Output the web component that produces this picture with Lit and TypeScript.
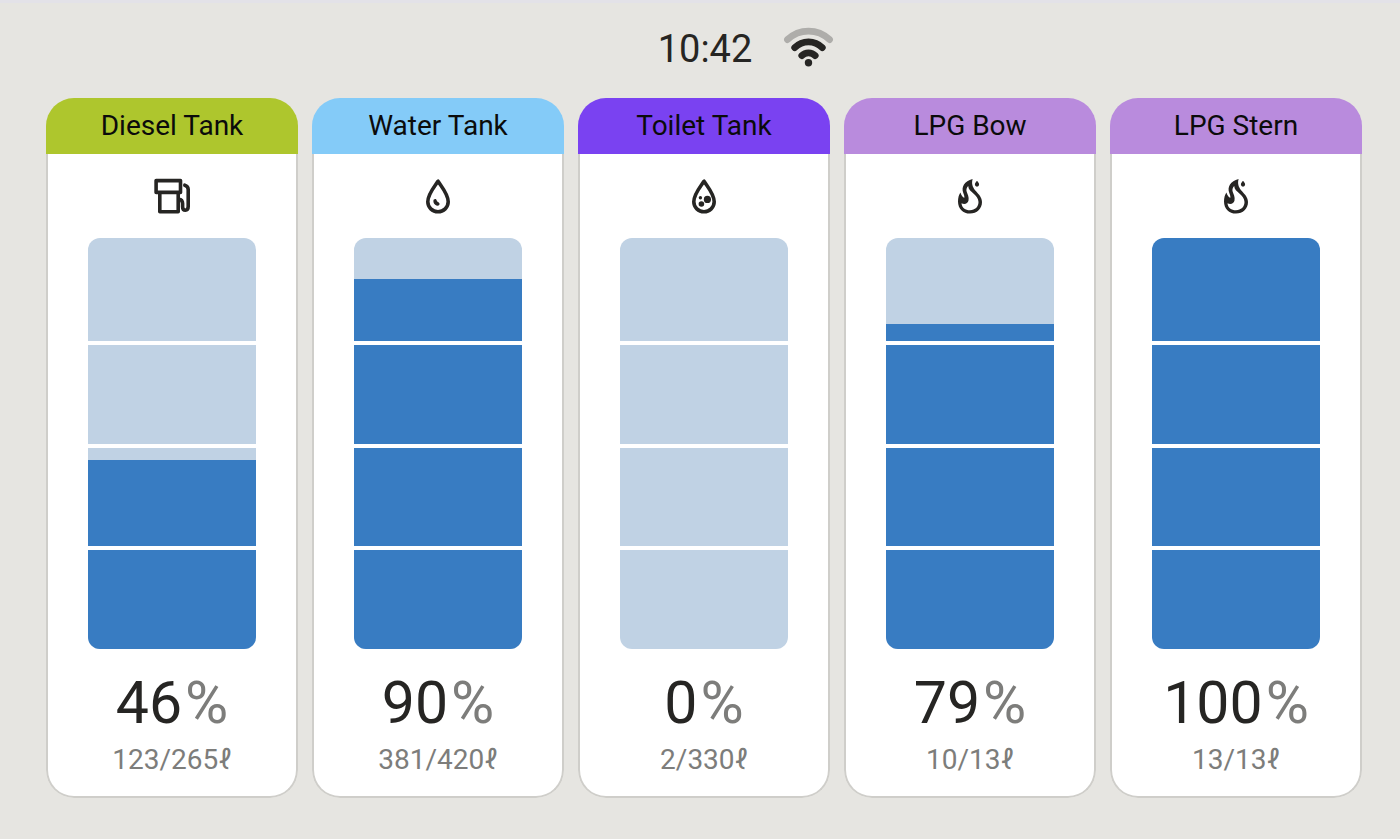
import { LitElement, html, svg, css } from "lit";
import { customElement, property } from "lit/decorators.js";

type IconName = "fuel" | "water" | "waste" | "gas";

interface Tank {
  name: string;
  color: string;
  icon: IconName;
  level: number;
  amount: number;
  capacity: number;
}

const TANKS: Tank[] = [
  { name: "Diesel Tank", color: "#aec62d", icon: "fuel", level: 46, amount: 123, capacity: 265 },
  { name: "Water Tank", color: "#84cbf8", icon: "water", level: 90, amount: 381, capacity: 420 },
  { name: "Toilet Tank", color: "#7a42f1", icon: "waste", level: 0, amount: 2, capacity: 330 },
  { name: "LPG Bow", color: "#b98bdd", icon: "gas", level: 79, amount: 10, capacity: 13 },
  { name: "LPG Stern", color: "#b98bdd", icon: "gas", level: 100, amount: 13, capacity: 13 },
];

const DROP = svg`<path d="M20 4.2C17.2 8.8 9.8 17 9.8 24.8A10.2 10 0 0 0 30.2 24.8C30.2 17 22.8 8.8 20 4.2Z" />`;

const ICONS = {
  fuel: svg`
    <path d="M4.1 3.6H28.5V15.4H4.1Z" />
    <path d="M7.8 15.4V34.8H26.2V15.4" />
    <path d="M32.8 8.2Q36.2 9.2 36.2 12.5V29.6Q36.2 33.2 33.4 33.2Q30.6 33.2 30.6 29.8V26.6Q30.6 22.6 26.8 22.2" stroke-linecap="round" />`,
  water: svg`${DROP}<path class="solid" d="M15.6 22.8C17 21.6 18.4 21.8 18.7 23.6C19 25.2 21.2 25 21.6 26.8C21.6 29 19 29.2 17.2 27.8C15.6 26.6 15 24.6 15.6 22.8Z" />`,
  waste: svg`${DROP}
    <circle class="solid" cx="23.4" cy="22.4" r="3.6" />
    <circle class="solid" cx="17.4" cy="27" r="2.8" />
    <circle class="solid" cx="16.4" cy="20.8" r="1.7" />`,
  gas: svg`
    <path class="solid" fill-rule="evenodd" d="M22.6 2C14.4 4.2 11 10 13.3 16C13.9 17.6 14.5 19 14.4 20.8C12.6 20.2 11.4 18.2 10.4 15.4C8.8 17.8 8 20.8 8 24.4C8 31.6 13 36.6 20 36.6C27 36.6 32 31.6 32 25C32 15.6 19.4 13.6 22.6 2ZM18.2 9C18.4 15.4 28.5 17.4 28.5 25C28.5 29.8 25 33.2 20 33.2C15.4 33.2 11.8 30.6 11.5 26.2C14.6 27.8 17.8 26.6 18.5 23.4C19.2 20.2 17.6 17.4 16.7 14.8C16 12.6 16.6 10.6 18.2 9Z" />
    <path class="solid" d="M27 3.8C28.2 5.4 29.1 6.2 29.1 7.6A2.1 2.1 0 0 1 24.9 7.6C24.9 6.2 25.8 5.4 27 3.8Z" />`,
};

@customElement("tank-card")
class TankCard extends LitElement {
  @property({ attribute: false }) tank!: Tank;

  static styles = css`
    :host {
      display: block;
      min-width: 0;
    }
    .card {
      box-sizing: border-box;
      height: 100%;
      display: flex;
      flex-direction: column;
      align-items: center;
      overflow: hidden;
      border-radius: 28px;
    }
    .title {
      box-sizing: border-box;
      width: 100%;
      margin: 0;
      padding: 10px 12px;
      font-size: 28px;
      line-height: 36px;
      font-weight: 400;
      text-align: center;
      color: #0b0b0b;
    }
    .body {
      box-sizing: border-box;
      flex: 1;
      width: 100%;
      display: flex;
      flex-direction: column;
      align-items: center;
      padding: 23px 12px 20px;
      border: 2px solid #cfceca;
      border-top: 0;
      border-radius: 0 0 28px 28px;
      background: #fff;
    }
    .icon {
      width: 40px;
      height: 40px;
      fill: none;
      stroke: #262523;
      stroke-width: 3.6;
      stroke-linejoin: round;
    }
    .solid {
      fill: #262523;
      stroke: none;
    }
    .gauge {
      flex: 1;
      width: 75%;
      margin-top: 21px;
      display: grid;
      border-radius: 12px;
      overflow: hidden;
      background: #c0d2e4;
    }
    .fill,
    .marks {
      grid-area: 1 / 1;
    }
    .fill {
      align-self: end;
      background: #387cc2;
    }
    .marks {
      display: grid;
      grid-template-rows: repeat(4, 1fr);
    }
    .mark + .mark {
      border-top: 4px solid #fff;
    }
    .level {
      margin-top: 20px;
      display: flex;
      gap: 3px;
      font-size: 59px;
      line-height: 68px;
      color: #262523;
    }
    .unit {
      color: #7d7d7b;
    }
    .amount {
      margin-top: 7px;
      font-size: 28px;
      line-height: 32px;
      color: #7d7d7b;
    }
  `;

  render() {
    const { name, color, icon, level, amount, capacity } = this.tank;
    return html`
      <article class="card">
        <h2 class="title" style="background:${color}">${name}</h2>
        <div class="body">
          <svg class="icon" viewBox="0 0 40 40" aria-hidden="true">${ICONS[icon]}</svg>
          <div class="gauge" role="meter" aria-label=${name} aria-valuemin="0" aria-valuemax="100" aria-valuenow=${level}>
            <div class="fill" style="height:${level}%"></div>
            <div class="marks">${[0, 1, 2, 3].map(() => html`<span class="mark"></span>`)}</div>
          </div>
          <div class="level"><span>${level}</span><span class="unit">%</span></div>
          <div class="amount">${amount}/${capacity}ℓ</div>
        </div>
      </article>
    `;
  }
}

@customElement("app-root")
class AppRoot extends LitElement {
  static styles = css`
    :host {
      box-sizing: border-box;
      min-height: 100vh;
      display: flex;
      flex-direction: column;
      padding: 19px 38px 41px 46px;
      border-top: 3px solid #e3e2e8;
      background: #e6e5e1;
      font-family: Roboto, "Liberation Sans", sans-serif;
    }
    .status {
      display: flex;
      justify-content: center;
      align-items: center;
      gap: 30px;
      padding-left: 84px;
      color: #262523;
    }
    .clock {
      font-size: 38px;
      line-height: 54px;
    }
    .wifi {
      width: 52px;
      height: 44px;
      fill: none;
      stroke: #262523;
      stroke-width: 6.8;
      stroke-linecap: round;
    }
    .weak {
      stroke: #aeadaa;
    }
    .dot {
      fill: #262523;
      stroke: none;
    }
    .tanks {
      flex: 1;
      margin-top: 22px;
      display: grid;
      grid-template-columns: repeat(5, minmax(0, 1fr));
      gap: 14px;
    }
  `;

  render() {
    return html`
      <header class="status">
        <time class="clock">10:42</time>
        <svg class="wifi" viewBox="0 0 52 44" role="img" aria-label="Wi-Fi signal">
          <path class="weak" d="M5.5 12.6Q14.5 4.2 26.5 4.2Q38.5 4.2 47.5 12.6" />
          <path d="M12.7 20.6Q18.5 14.8 26.5 14.8Q34.5 14.8 40.3 20.6" />
          <path d="M19.8 28.6Q22.5 25.8 26.5 25.8Q30.5 25.8 33.2 28.6" />
          <circle class="dot" cx="26.5" cy="35.8" r="3.7" />
        </svg>
      </header>
      <main class="tanks">
        ${TANKS.map((tank) => html`<tank-card .tank=${tank}></tank-card>`)}
      </main>
    `;
  }
}
